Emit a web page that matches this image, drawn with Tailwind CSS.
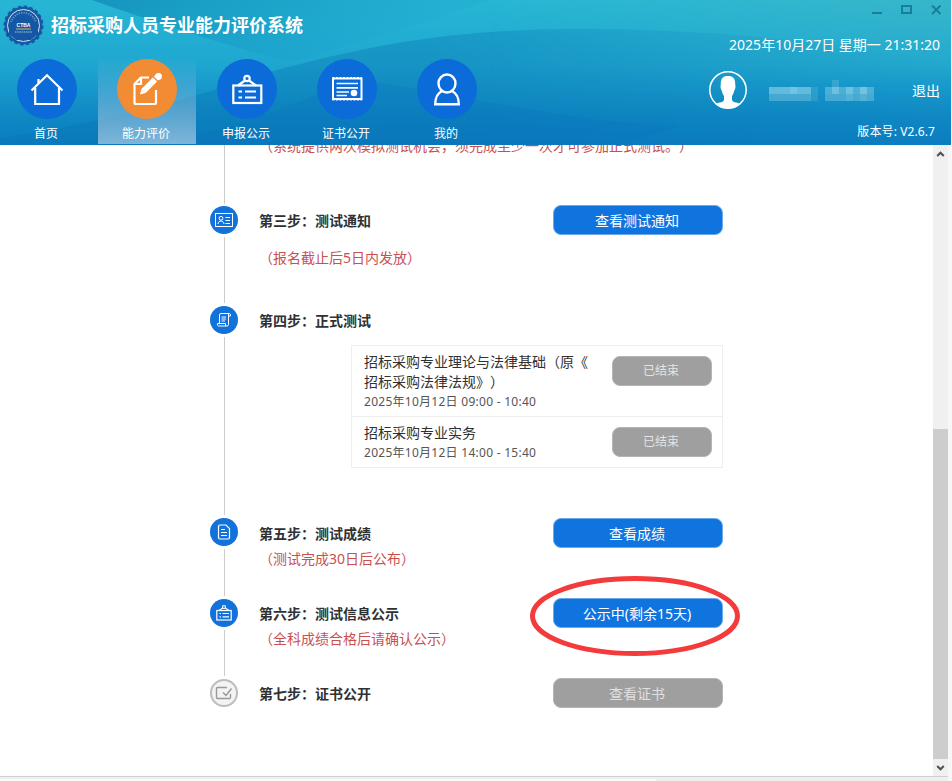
<!DOCTYPE html>
<html lang="zh-CN">

<head>
    <meta charset="UTF-8" />
    <meta name="viewport" content="width=device-width, initial-scale=1.0" />
    <title>招标采购人员专业能力评价系统</title>
    <script src="https://cdn.jsdelivr.net/npm/@tailwindcss/browser@4"></script>
</head>

<body class="w-[952px] h-[781px] overflow-hidden bg-[#f7f7f7] flex flex-col font-['Noto_Sans','Noto_Sans_CJK_SC',sans-serif] text-sm whitespace-nowrap [text-spacing-trim:space-all]">
    <!-- Header -->
    <header class="relative h-[145px] w-[951px] shrink-0 overflow-hidden text-white">
        <svg class="absolute inset-0" width="951" height="145" viewBox="0 0 951 145" preserveAspectRatio="none">
            <defs>
                <linearGradient id="base" x1="0" y1="0" x2="0" y2="1">
                    <stop offset="0" stop-color="#27b7d5" />
                    <stop offset="0.45" stop-color="#1ea6d0" />
                    <stop offset="0.8" stop-color="#0f88c4" />
                    <stop offset="1" stop-color="#0b7dc1" />
                </linearGradient>
                <linearGradient id="dark" x1="0" y1="0" x2="0.9" y2="0.5">
                    <stop offset="0" stop-color="#0679ac" stop-opacity="0.55" />
                    <stop offset="1" stop-color="#0b87b5" stop-opacity="0" />
                </linearGradient>
                <linearGradient id="wave" x1="0" y1="0" x2="1" y2="0">
                    <stop offset="0" stop-color="#0673b0" stop-opacity="0.35" />
                    <stop offset="0.45" stop-color="#0672b0" stop-opacity="0.35" />
                    <stop offset="1" stop-color="#0673b0" stop-opacity="0" />
                </linearGradient>
                <linearGradient id="right" x1="0" y1="0" x2="1" y2="0">
                    <stop offset="0" stop-color="#4cb6bd" stop-opacity="0" />
                    <stop offset="1" stop-color="#4cb6bd" stop-opacity="0.45" />
                </linearGradient>
                <linearGradient id="right2" x1="0" y1="0" x2="0" y2="1">
                    <stop offset="0" stop-color="#fff" />
                    <stop offset="0.6" stop-color="#000" />
                </linearGradient>
                <mask id="fade">
                    <rect width="951" height="145" fill="url(#right2)" />
                </mask>
            </defs>
            <rect width="951" height="145" fill="url(#base)" />
            <path d="M92 0H490C430 22 360 42 290 62C250 52 170 28 92 0Z" fill="url(#dark)" />
            <path d="M0 145V138C90 125 190 100 270 72C370 45 450 30 570 29C720 28 860 45 951 65V145Z" fill="url(#wave)" />
            <path d="M350 78C470 95 560 122 680 126L620 145H150C230 130 300 105 350 78Z" fill="#0a6fbc" fill-opacity="0.2" />
            <rect x="480" width="471" height="145" fill="url(#right)" mask="url(#fade)" />
        </svg>

        <div class="relative flex h-full justify-between">
            <div>
                <div class="flex h-[51px] items-center pb-[2px] pl-[3px]">
                    <svg class="shrink-0" width="41" height="42" viewBox="0 0 41 42">
                        <circle cx="20.500" cy="21.500" r="18.800" fill="#1457a4" />
                        <circle cx="20.500" cy="21.500" r="19.200" fill="none" stroke="#1457a4" stroke-width="1.600" stroke-dasharray="3.500 2.500" />
                        <circle cx="20.500" cy="21.500" r="16" fill="none" stroke="#d6e6f5" stroke-width="1" />
                        <circle cx="20.500" cy="21.500" r="12.800" fill="none" stroke="#9fc3e4" stroke-width="1.800" stroke-dasharray="1.200 1.200" stroke-opacity="0.6" />
                        <path d="M6 18H35V30L28 36H13L6 30Z" fill="#1457a4" />
                        <text x="20.500" y="22.500" text-anchor="middle" font-family="Liberation Sans" font-weight="bold" font-size="5" fill="#fff">CTBA</text>
                        <path d="M13 25H28" stroke="#d9b45c" />
                        <path d="M12 28H29" stroke="#a9c8e6" stroke-dasharray="1.500 0.700" />
                    </svg>
                    <h1 class="ml-[7px] text-lg font-bold">招标采购人员专业能力评价系统</h1>
                </div>

                <nav class="-ml-0.5 mt-[5px] flex gap-0.5 text-xs">
                    <a class="flex h-[88px] w-[98px] flex-col items-center pt-[3px]">
                        <span class="flex size-[60px] items-center justify-center rounded-full bg-[#0b6bd8]">
                            <svg width="36" height="36" viewBox="0 0 36 36" fill="none" stroke="#fff" stroke-width="2.200">
                                <path d="M2.500 19.500L18 4.300L33.500 19.500M6.200 17V33H30V17M9.500 12V8" />
                            </svg>
                        </span>
                        <span class="mt-[7px] pr-[2px] leading-4">首页</span>
                    </a>
                    <a class="flex h-[88px] w-[98px] flex-col items-center bg-gradient-to-b from-white/0 to-[#9cc4e0]/80 pt-[3px]">
                        <span class="flex size-[60px] items-center justify-center rounded-full bg-[#f28c34]">
                            <svg width="36" height="36" viewBox="0 0 36 36" fill="none" stroke="#fff" stroke-width="2.200">
                                <path d="M20 6.500H12L5.500 13V31.500Q5.500 33 7 33H25.500Q27 33 27 31.500V19M12 6.500V13H5.500" stroke-linejoin="round" />
                                <path d="M28.500 6L14.500 20" stroke-width="6" />
                                <path d="M12.400 17.900L11 23.500L16.600 22.100Z" fill="#fff" stroke="none" />
                                <circle cx="29.500" cy="5.500" r="3.400" fill="#fff" stroke="none" />
                                <path d="M24 5.500L29.500 11" stroke="#f28c34" stroke-width="1.200" />
                            </svg>
                        </span>
                        <span class="mt-[7px] pr-[2px] leading-4">能力评价</span>
                    </a>
                    <a class="flex h-[88px] w-[98px] flex-col items-center pt-[3px]">
                        <span class="flex size-[60px] items-center justify-center rounded-full bg-[#0b6bd8]">
                            <svg width="36" height="36" viewBox="0 0 36 36" fill="none" stroke="#fff" stroke-width="2.200">
                                <rect x="4.300" y="14.500" width="28" height="17.500" />
                                <circle cx="18" cy="7.500" r="2.700" />
                                <path d="M16 9.500L9 14.500M20 9.500L27 14.500M9.500 20.500H13M9.500 26.500H13M16 20.500H27M16 26.500H27" />
                            </svg>
                        </span>
                        <span class="mt-[7px] pr-[2px] leading-4">申报公示</span>
                    </a>
                    <a class="flex h-[88px] w-[98px] flex-col items-center pt-[3px]">
                        <span class="flex size-[60px] items-center justify-center rounded-full bg-[#0b6bd8]">
                            <svg width="36" height="36" viewBox="0 0 36 36" fill="none" stroke="#fff" stroke-width="2">
                                <rect x="4" y="7.500" width="28.500" height="20.500" />
                                <path d="M3.500 6.500H33M3.500 29H33" stroke-width="1" stroke-dasharray="2 1.500" />
                                <path d="M7.500 12.500H29M7.500 16.800H29M7.500 21H20M7.500 24.500H18" stroke-width="1.700" />
                                <circle cx="25" cy="22" r="3.300" fill="#fff" stroke="none" />
                            </svg>
                        </span>
                        <span class="mt-[7px] pr-[2px] leading-4">证书公开</span>
                    </a>
                    <a class="flex h-[88px] w-[98px] flex-col items-center pt-[3px]">
                        <span class="flex size-[60px] items-center justify-center rounded-full bg-[#0b6bd8]">
                            <svg width="36" height="36" viewBox="0 0 36 36" fill="none" stroke="#fff" stroke-width="2.400">
                                <ellipse cx="18" cy="12.500" rx="8.500" ry="9" />
                                <path d="M13 20C8 22.500 6.200 26.500 6.200 33.200H29.800C29.800 26.500 28 22.500 23 20" />
                            </svg>
                        </span>
                        <span class="mt-[7px] pr-[2px] leading-4">我的</span>
                    </a>
                </nav>
            </div>

            <div class="flex flex-col items-end pr-[11px]">
                <div class="-mr-[2px] flex gap-[18px] pt-1">
                    <svg width="11" height="12" viewBox="0 0 11 12"><path d="M0 9H10" stroke="#177f97" stroke-width="2" /></svg>
                    <svg width="12" height="12" viewBox="0 0 12 12"><rect x="1" y="2" width="9" height="7" fill="none" stroke="#177f97" stroke-width="2" /></svg>
                    <svg width="11" height="12" viewBox="0 0 11 12"><path d="M1 1.500L9.500 10M9.500 1.500L1 10" stroke="#177f97" stroke-width="2" /></svg>
                </div>
                <div class="mt-[19px] leading-5">2025年10月27日 星期一 21:31:20</div>
                <div class="mt-4 flex items-center">
                    <svg width="38" height="38" viewBox="0 0 38 38">
                        <circle cx="19" cy="19" r="18.200" fill="none" stroke="#fff" stroke-width="1.500" />
                        <path d="M19 5C13.500 5 11.500 8 11.800 14C11 14.500 11.800 19 12.800 19.500C13.200 22.500 14.500 24 15 25V29C14 32 8 31.500 6.500 33C13 38.500 25 38.500 31.500 33C30 31.500 24 32 23 29V25C23.500 24 24.800 22.500 25.200 19.500C26.200 19 27 14.500 26.200 14C26.500 8 24.500 5 19 5Z" fill="#fff" />
                    </svg>
                    <!-- Masked user name -->
                    <svg class="ml-[22px]" width="106" height="22" viewBox="0 0 106 22" fill="#8ed0e6">
                        <rect x="0" y="8" width="42" height="7" opacity="0.65" />
                        <rect x="21" y="8" width="7" height="7" opacity="0.4" />
                        <rect x="0" y="15" width="42" height="7" opacity="0.4" />
                        <rect x="42" y="8" width="7" height="14" opacity="0.18" />
                        <rect x="56" y="8" width="49" height="7" opacity="0.45" />
                        <rect x="63" y="1" width="7" height="7" opacity="0.25" />
                        <rect x="63" y="8" width="7" height="7" opacity="0.5" />
                        <rect x="77" y="8" width="7" height="7" opacity="0.5" />
                        <rect x="91" y="8" width="7" height="7" opacity="0.6" />
                        <rect x="56" y="15" width="49" height="7" opacity="0.4" />
                        <rect x="77" y="15" width="7" height="7" opacity="0.2" />
                        <rect x="91" y="15" width="7" height="7" opacity="0.2" />
                    </svg>
                    <a class="ml-[37px] pt-px">退出</a>
                </div>
                <div class="mt-[15px] mr-[5px] text-xs leading-4 tracking-[0.1px]">版本号: V2.6.7</div>
            </div>
        </div>
    </header>

    <!-- Steps -->
    <main class="flex h-[632px] w-[948px] shrink-0 overflow-hidden border-b border-[#cfcfcf] bg-white text-[#303133]">
        <div class="flex-1 pl-[210px]">
            <!-- Step 2, scrolled under the header -->
            <div class="flex h-[58px]">
                <div class="flex w-7 justify-center"><div class="ml-px h-[59px] w-px bg-[#ccc]"></div></div>
                <p class="-mt-[9px] ml-[21px] leading-5 text-[#c9504f]">（系统提供两次模拟测试机会，须完成至少一次才可参加正式测试。）</p>
            </div>

            <!-- Step 3 -->
            <div class="flex h-[100px]">
                <div class="flex w-7 flex-col items-center pt-[3px]">
                    <span class="flex size-7 shrink-0 items-center justify-center rounded-full bg-[#1272d9]">
                        <svg width="20" height="16" viewBox="0 0 20 16" fill="none" stroke="#fff">
                            <rect x="1.500" y="1.500" width="17" height="13" />
                            <circle cx="7" cy="6.300" r="1.900" />
                            <path d="M4 12C4.200 8 9.800 8 10 12M11.500 5.500H16M11.500 8.500H16M11.500 11.500H16" />
                        </svg>
                    </span>
                    <div class="mt-[3px] ml-px w-px flex-1 bg-[#ccc]"></div>
                </div>
                <div class="ml-[21px] w-[294px] pt-2">
                    <h2 class="leading-5 font-bold">第三步：测试通知</h2>
                    <p class="mt-[17px] leading-5 text-[#c9504f]">（报名截止后5日内发放）</p>
                </div>
                <button class="mt-[2px] h-[30px] w-[170px] rounded-lg border border-[#6caae8] bg-[#1074df] pt-[2px] pr-[2px] text-white">查看测试通知</button>
            </div>

            <!-- Step 4 -->
            <div class="flex h-[212px]">
                <div class="flex w-7 flex-col items-center pt-[3px]">
                    <span class="flex size-7 shrink-0 items-center justify-center rounded-full bg-[#1272d9]">
                        <svg width="16" height="16" viewBox="0 0 16 16" fill="none" stroke="#fff">
                            <path d="M3.500 11V3Q3.500 1.500 5 1.500H13.500Q14.800 1.800 14.500 4H12.500M12.500 2V12.500Q12.500 14 11 14H2.500Q1.200 14 1.500 11.500H9.500V14M5.500 5H10M5.500 7H10M5.500 9H9" />
                        </svg>
                    </span>
                    <div class="mt-[3px] ml-px w-px flex-1 bg-[#ccc]"></div>
                </div>
                <div class="ml-[21px] pt-2">
                    <h2 class="leading-5 font-bold">第四步：正式测试</h2>
                    <div class="mt-[14px] ml-[92px] w-[372px] border border-[#eee]">
                        <div class="flex h-[71px] justify-between border-b border-[#eee] pt-1.5 pr-2.5 pl-3">
                            <div>
                                <p class="leading-5">招标采购专业理论与法律基础（原《<br />招标采购法律法规》）</p>
                                <p class="text-xs leading-5 tracking-[0.27px] text-[#555]">2025年10月12日 09:00 - 10:40</p>
                            </div>
                            <button class="mt-1 h-[30px] w-[100px] rounded-lg border border-[#b4b4b4] bg-[#9f9f9f] pr-[2px] text-xs text-[#e4e4e4]">已结束</button>
                        </div>
                        <div class="flex h-[50px] justify-between pt-1.5 pr-2.5 pl-3">
                            <div>
                                <p class="leading-5">招标采购专业实务</p>
                                <p class="text-xs leading-5 tracking-[0.27px] text-[#555]">2025年10月12日 14:00 - 15:40</p>
                            </div>
                            <button class="mt-1 h-[30px] w-[100px] rounded-lg border border-[#b4b4b4] bg-[#9f9f9f] pr-[2px] text-xs text-[#e4e4e4]">已结束</button>
                        </div>
                    </div>
                </div>
            </div>

            <!-- Step 5 -->
            <div class="flex h-[81px]">
                <div class="flex w-7 flex-col items-center pt-[3px]">
                    <span class="flex size-7 shrink-0 items-center justify-center rounded-full bg-[#1272d9]">
                        <svg width="16" height="18" viewBox="0 0 16 18" fill="none" stroke="#fff">
                            <path d="M2.500 3.500Q2.500 2 4 2H10L13.500 5.500V14.500Q13.500 16 12 16H4Q2.500 16 2.500 14.500ZM5 6.500H9M5 9.500H11M5 12.500H11" stroke-width="1.200" />
                        </svg>
                    </span>
                    <div class="mt-[3px] ml-px w-px flex-1 bg-[#ccc]"></div>
                </div>
                <div class="ml-[21px] w-[294px] pt-[9px]">
                    <h2 class="leading-5 font-bold">第五步：测试成绩</h2>
                    <p class="mt-[5px] leading-5 text-[#c9504f]">（测试完成30日后公布）</p>
                </div>
                <button class="mt-[3px] h-[30px] w-[170px] rounded-lg border border-[#6caae8] bg-[#1074df] pt-[2px] pr-[2px] text-white">查看成绩</button>
            </div>

            <!-- Step 6 -->
            <div class="flex h-20">
                <div class="flex w-7 flex-col items-center pt-[3px]">
                    <span class="flex size-7 shrink-0 items-center justify-center rounded-full bg-[#1272d9]">
                        <svg width="18" height="18" viewBox="0 0 18 18" fill="none" stroke="#fff" stroke-width="1.200">
                            <rect x="1.800" y="6.500" width="14.400" height="9.500" />
                            <circle cx="9" cy="3" r="1.500" />
                            <path d="M7.800 4L4 6.500M10.200 4L14 6.500M4.500 9.500H6M4.500 12.800H6M7.500 9.500H14M7.500 12.800H14" />
                        </svg>
                    </span>
                    <div class="mt-[3px] ml-px w-px flex-1 bg-[#ccc]"></div>
                </div>
                <div class="ml-[21px] w-[294px] pt-2">
                    <h2 class="leading-5 font-bold">第六步：测试信息公示</h2>
                    <p class="mt-[5px] leading-5 text-[#c9504f]">（全科成绩合格后请确认公示）</p>
                </div>
                <div class="relative mt-[2px] h-[30px]">
                    <button class="h-[30px] w-[170px] rounded-lg border border-[#6caae8] bg-[#1074df] pt-[2px] pr-[2px] text-white">公示中(剩余15天)</button>
                    <svg class="absolute -top-[23px] -left-6" width="212" height="82" viewBox="0 0 212 82">
                        <ellipse cx="106" cy="41" rx="102.500" ry="37.500" fill="none" stroke="#f43b3c" stroke-width="5" />
                    </svg>
                </div>
            </div>

            <!-- Step 7 -->
            <div class="flex">
                <div class="w-7 pt-[3px]">
                    <span class="flex size-7 items-center justify-center rounded-full border-2 border-[#bdbdbd] bg-[#f3f3f3]">
                        <svg width="18" height="16" viewBox="0 0 18 16" fill="none" stroke="#999" stroke-width="1.400">
                            <path d="M12 2.500H2.500Q1.500 2.500 1.500 3.500V12.500Q1.500 13.500 2.500 13.500H14.500Q15.500 13.500 15.500 12.500V9M8 7.500L11 10.500L16.500 3.500" />
                        </svg>
                    </span>
                </div>
                <h2 class="ml-[21px] w-[294px] pt-2 leading-5 font-bold">第七步：证书公开</h2>
                <button class="mt-[2px] h-[30px] w-[170px] rounded-lg border border-[#b4b4b4] bg-[#9f9f9f] pt-[2px] pr-[2px] text-[#e0e0e0]">查看证书</button>
            </div>
        </div>

        <!-- Scrollbar -->
        <div class="flex w-[15px] flex-col justify-between bg-[#f0f0f0]">
            <svg width="15" height="17" viewBox="0 0 15 17"><path d="M4.200 11L7.500 7.700L10.800 11" fill="none" stroke="#505050" stroke-width="2" /></svg>
            <div>
                <div class="h-[330px] bg-[#cdcdcd]"></div>
                <svg class="block" width="15" height="17" viewBox="0 0 15 17"><path d="M4.200 7L7.500 10.300L10.800 7" fill="none" stroke="#505050" stroke-width="2" /></svg>
            </div>
        </div>
    </main>

    <footer class="flex w-[948px] flex-1 items-end bg-[#efefef]">
        <div class="h-[2px] w-[656px] bg-[#fafafa]"></div>
    </footer>
</body>

</html>
